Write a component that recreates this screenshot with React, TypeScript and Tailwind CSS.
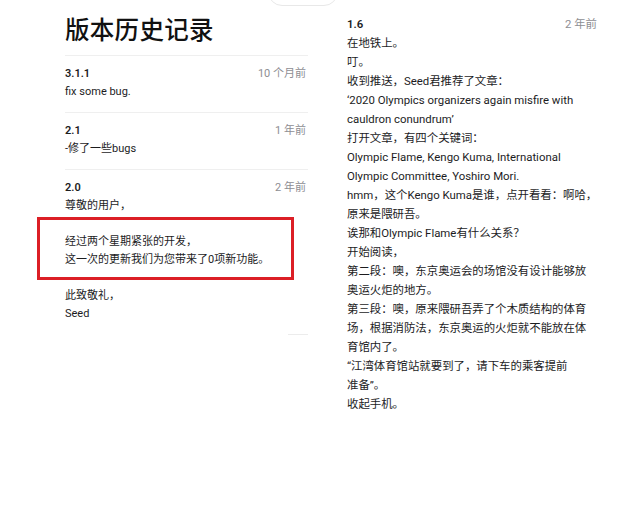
const font = "font-['Roboto','Noto_Sans_CJK_SC',sans-serif]";

type Release = {
  version: string;
  when: string;
  lines: string[];
};

const releases: Release[] = [
  { version: '3.1.1', when: '10 个月前', lines: ['fix some bug.'] },
  { version: '2.1', when: '1 年前', lines: ['-修了一些bugs'] },
  {
    version: '2.0',
    when: '2 年前',
    lines: [
      '尊敬的用户，',
      '',
      '经过两个星期紧张的开发，',
      '这一次的更新我们为您带来了0项新功能。',
      '',
      '此致敬礼，',
      'Seed',
    ],
  },
];

const story = [
  '在地铁上。',
  '叮。',
  '收到推送，Seed君推荐了文章：',
  '‘2020 Olympics organizers again misfire with',
  'cauldron conundrum’',
  '打开文章，有四个关键词：',
  'Olympic Flame, Kengo Kuma, International',
  'Olympic Committee, Yoshiro Mori.',
  'hmm，这个Kengo Kuma是谁，点开看看：啊哈，',
  '原来是隈研吾。',
  '诶那和Olympic Flame有什么关系？',
  '开始阅读，',
  '第二段：噢，东京奥运会的场馆没有设计能够放',
  '奥运火炬的地方。',
  '第三段：噢，原来隈研吾弄了个木质结构的体育',
  '场，根据消防法，东京奥运的火炬就不能放在体',
  '育馆内了。',
  '“江湾体育馆站就要到了，请下车的乘客提前',
  '准备”。',
  '收起手机。',
];

function ReleaseHeader({ release }: { release: Release }) {
  return (
    <div className="flex items-center justify-between leading-[18px]">
      <span className="text-[11px] font-semibold text-[#1c1c1e]">{release.version}</span>
      <span className="pr-[2px] text-[11px] text-[#8e8e93]">{release.when}</span>
    </div>
  );
}

function ReleaseLines({ lines }: { lines: string[] }) {
  return (
    <>
      {lines.map((line, i) => (
        <div key={i} className="h-[18px] whitespace-nowrap text-[11px] leading-[18px] text-[#1c1c1e]">
          {line}
        </div>
      ))}
    </>
  );
}

export default function App() {
  const last = releases[2];
  return (
    <div className={`relative h-[508px] w-[640px] overflow-hidden bg-white ${font}`}>
      {/* sheet handle peeking in at the top */}
      <div className="absolute left-[268px] top-[-22px] h-[28px] w-[70px] rounded-[14px] border border-[#e8e8e8] bg-white" />

      <div className="flex">
        {/* Left: version history */}
        <div className="ml-[65px] w-[243px]">
          <h1 className="pt-[15px] pb-[8px] text-[24.5px] font-medium leading-[32px] tracking-[0.3px] text-[#111]">
            版本历史记录
          </h1>
          <div className="border-t border-[#efefef]">
            {releases.slice(0, 2).map((r) => (
              <div key={r.version} className="border-b border-[#efefef] pt-[9px] pb-[11px]">
                <ReleaseHeader release={r} />
                <ReleaseLines lines={r.lines} />
              </div>
            ))}
            <div className="pt-[9px]">
              <ReleaseHeader release={last} />
              <ReleaseLines lines={last.lines} />
            </div>
            <div className="mt-[11px] ml-auto h-px w-[20px] bg-[#ececec]" />
          </div>
        </div>

        {/* Right: 1.6 notes */}
        <div className="ml-[39px] w-[250px] pt-[14px]">
          <div className="flex items-center justify-between leading-[20px]">
            <span className="text-[11.4px] font-semibold text-[#1c1c1e]">1.6</span>
            <span className="text-[11.4px] text-[#8e8e93]">2 年前</span>
          </div>
          {story.map((line, i) => (
            <div key={i} className="h-[19px] whitespace-nowrap text-[11.4px] leading-[19px] text-[#1c1c1e]">
              {line}
            </div>
          ))}
        </div>
      </div>

      {/* red highlight annotation */}
      <div className="absolute left-[37px] top-[217px] h-[63px] w-[257px] border-[3px] border-[#dc1f26]" />
    </div>
  );
}
